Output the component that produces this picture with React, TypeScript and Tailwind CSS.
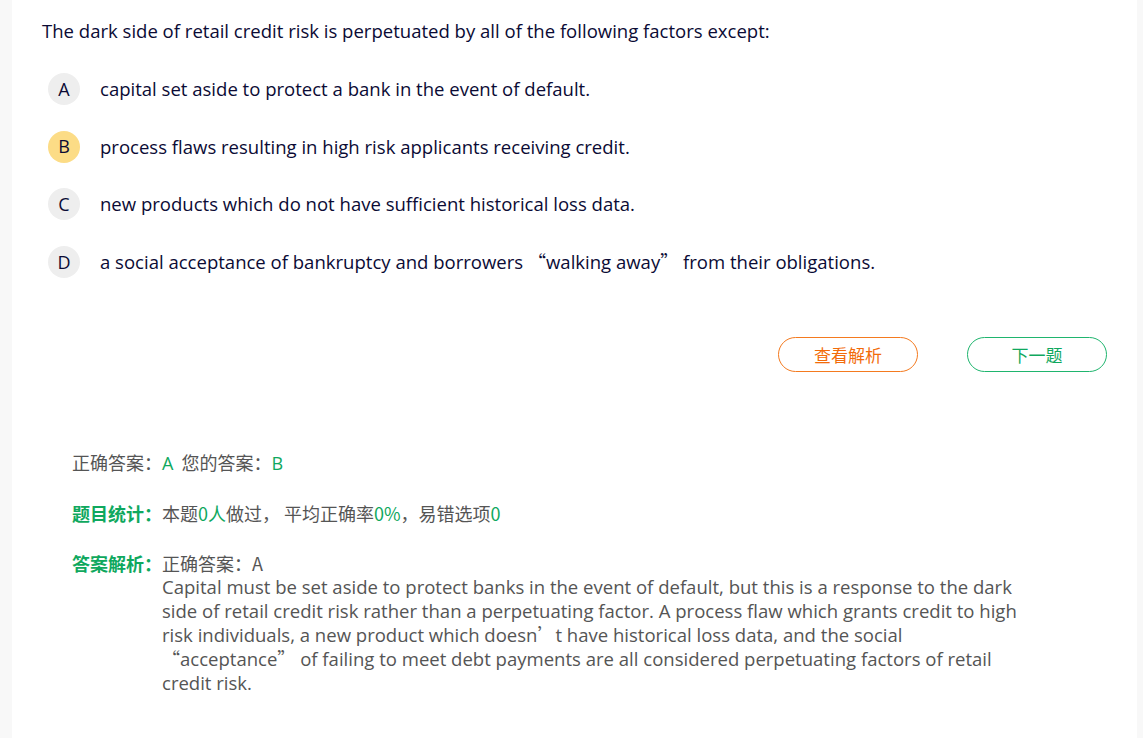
import React from "react";

const options = [
  { key: "A", text: <>capital set aside to protect a bank in the event of default.</>, picked: false },
  { key: "B", text: <>process flaws resulting in high risk applicants receiving credit.</>, picked: true },
  { key: "C", text: <>new products which do not have sufficient historical loss data.</>, picked: false },
  {
    key: "D",
    text: (
      <>
        a social acceptance of bankruptcy and borrowers <Cjk>“</Cjk>walking away<Cjk>”</Cjk> from their obligations.
      </>
    ),
    picked: false,
  },
];

function Cjk({ children }: { children: React.ReactNode }) {
  return <span className="font-['Noto_Sans_CJK_SC',sans-serif] text-[18px] leading-none">{children}</span>;
}

export default function App() {
  return (
    <div className="min-h-screen bg-[#f8f8f8] font-['Open_Sans','Noto_Sans_CJK_SC',sans-serif]">
      <div className="ml-[12px] w-[1125px] min-h-[738px] bg-white pt-[18px]">
        <div className="pl-[30px] text-[18.55px] leading-[26px] text-[#0b0b35]">
          The dark side of retail credit risk is perpetuated by all of the following factors except:
        </div>

        <div className="mt-[29px] flex flex-col gap-[25.7px] pl-[36px]">
          {options.map((o) => (
            <div key={o.key} className="flex items-center gap-[20px]">
              <div
                className={`flex h-[32px] w-[32px] shrink-0 items-center justify-center rounded-full text-[18px] text-[#0b0b35] ${
                  o.picked ? "bg-[#fcdc86]" : "bg-[#eeeeee]"
                }`}
              >
                {o.key}
              </div>
              <div className="text-[18.55px] leading-[26px] text-[#0b0b35]">{o.text}</div>
            </div>
          ))}
        </div>

        <div className="mt-[59px] flex justify-end gap-[49px] pr-[30px]">
          <button className="h-[35px] w-[140px] rounded-full border border-[#f47a1f] text-[17px] text-[#f26b0a] font-['Noto_Sans_CJK_SC',sans-serif]">
            查看解析
          </button>
          <button className="h-[35px] w-[140px] rounded-full border border-[#1fb56e] text-[17px] text-[#0fa85e] font-['Noto_Sans_CJK_SC',sans-serif]">
            下一题
          </button>
        </div>

        <div className="mt-[78px] pl-[60px] text-[18px] text-[#555555]">
          <div className="leading-[24px]">
            <span className="font-['Noto_Sans_CJK_SC',sans-serif]">正确答案：</span>
            <span className="text-[#0fa85e]">A</span>
            <span className="ml-[8px] font-['Noto_Sans_CJK_SC',sans-serif]">您的答案：</span>
            <span className="text-[#0fa85e]">B</span>
          </div>

          <div className="mt-[26px] flex leading-[24px]">
            <span className="w-[90px] shrink-0 font-bold text-[#0fa85e] font-['Noto_Sans_CJK_SC',sans-serif]">题目统计：</span>
            <span className="font-['Noto_Sans_CJK_SC',sans-serif]">
              本题<span className="text-[#0fa85e]">0人</span>做过， 平均正确率<span className="text-[#0fa85e]">0%</span>，易错选项<span className="text-[#0fa85e]">0</span>
            </span>
          </div>

          <div className="mt-[26px] flex leading-[24px]">
            <span className="w-[90px] shrink-0 font-bold text-[#0fa85e] font-['Noto_Sans_CJK_SC',sans-serif]">答案解析：</span>
            <div className="w-[862px]">
              <div className="font-['Noto_Sans_CJK_SC',sans-serif]">正确答案：A</div>
              <div className="text-[18.55px] leading-[24px]">
                Capital must be set aside to protect banks in the event of default, but this is a response to the dark side of retail credit risk rather than a perpetuating factor. A process flaw which grants credit to high risk individuals, a new product which doesn<Cjk>’</Cjk>t have historical loss data, and the social <Cjk>“</Cjk>acceptance<Cjk>”</Cjk> of failing to meet debt payments are all considered perpetuating factors of retail credit risk.
              </div>
            </div>
          </div>
        </div>
      </div>
    </div>
  );
}
